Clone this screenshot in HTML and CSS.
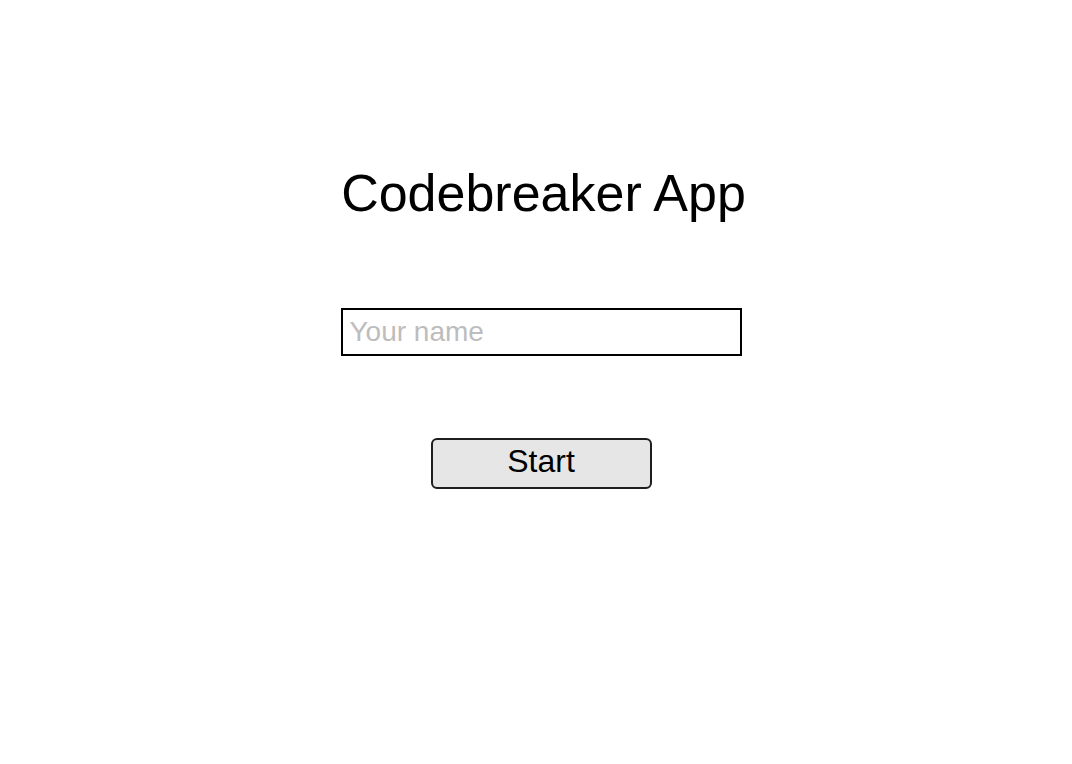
FILE: index.html
```html
<!DOCTYPE html>
<html lang="en">
<head>
<meta charset="utf-8">
<title>Codebreaker App</title>
<link rel="stylesheet" href="styles.css">
</head>
<body>
<main class="app">
  <h1 class="title">Codebreaker App</h1>
  <input class="name-input" type="text" placeholder="Your name">
  <button class="start-btn" type="button">Start</button>
</main>
</body>
</html>
```
FILE: styles.css
```css
html, body {
  margin: 0;
  padding: 0;
  background: #ffffff;
}

body {
  font-family: "Liberation Sans", Arial, Helvetica, sans-serif;
  color: #000;
}

.app {
  display: flex;
  flex-direction: column;
  align-items: center;
  padding: 163px 0 0 10px;
}

.title {
  margin: 0 0 0 5px;
  font-size: 52px;
  font-weight: 400;
  line-height: 60px;
}

.name-input {
  box-sizing: border-box;
  margin-top: 85px;
  width: 401px;
  height: 48px;
  border: 2px solid #000;
  border-radius: 0;
  padding: 0 7px;
  font-family: "Liberation Sans", Arial, Helvetica, sans-serif;
  font-size: 28px;
  color: #000;
  background: #fff;
  outline: none;
}

.name-input::placeholder {
  color: #bdbdbd;
}

.start-btn {
  box-sizing: border-box;
  margin-top: 82px;
  width: 221px;
  height: 51px;
  border: 2px solid #1e1e1e;
  border-radius: 6px;
  background: #e6e6e6;
  font-family: "Liberation Sans", Arial, Helvetica, sans-serif;
  font-size: 32px;
  color: #000;
  padding: 0 0 4px;
  cursor: pointer;
}
```
